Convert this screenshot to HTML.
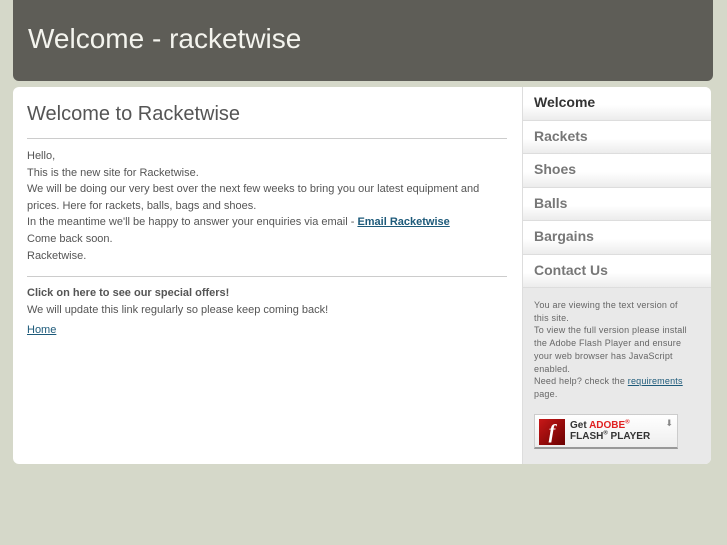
<!DOCTYPE html>
<html><head><style>
*{margin:0;padding:0;box-sizing:border-box}
body{width:727px;height:545px;background:#d5d8c9;font-family:"Liberation Sans",sans-serif;position:relative;overflow:hidden}
#hd{position:absolute;left:13px;top:0;width:700px;height:81px;background:#5e5d57;border-radius:0 0 6px 6px}
#hd h1{position:absolute;left:15px;top:23px;font-size:28px;font-weight:normal;color:#f4f4ee}
#main{position:absolute;left:13px;top:87px;width:698px;height:377px;background:#fff;border-radius:6px;overflow:hidden}
#content{position:absolute;left:14px;top:0;width:480px}
h2{font-size:20px;font-weight:normal;color:#555;margin-top:16px;height:35px}
hr{border:0;border-top:1px solid #ccc}
p{font-size:11px;line-height:16.6px;color:#555}
a{color:#1d5a7a;text-decoration:underline}
#side{position:absolute;left:509px;top:0;width:189px;height:377px;background:#e9e9e9;border-left:1px solid #ddd}
.nav{height:33.5px;border-bottom:1px solid #ddd;background:linear-gradient(#fff,#fff 55%,#ececec);font-size:14px;font-weight:bold;color:#777;padding:7px 0 0 11px}
.info{font-size:9px;line-height:12.7px;color:#666;padding:11px 0 0 11px;letter-spacing:0.2px;white-space:nowrap}
.flash{position:absolute;left:11px;top:327px;width:144px;height:35px;background:linear-gradient(#fff,#eee);border:1px solid #ccc;border-bottom:2px solid #999;}
.fl{position:absolute;left:4px;top:4px;width:26px;height:26px;background:linear-gradient(135deg,#c81818,#6a0000);color:#fff;font:italic bold 20px "Liberation Serif",serif;text-align:center;line-height:26px}
.ft{position:absolute;left:35px;top:5px;font-size:10px;font-weight:bold;color:#333;line-height:11px}
sup{font-size:6px;line-height:0}
</style></head><body>
<div id="hd"><h1>Welcome - racketwise</h1></div>
<div id="main">
<div id="content">
<h2>Welcome to Racketwise</h2>
<hr>
<p style="margin-top:9px">Hello,<br>This is the new site for Racketwise.<br>We will be doing our very best over the next few weeks to bring you our latest equipment and prices. Here for rackets, balls, bags and shoes.<br>In the meantime we'll be happy to answer your enquiries via email - <a href="#"><b>Email Racketwise</b></a><br>Come back soon.<br>Racketwise.</p>
<hr style="margin-top:12px">
<p style="margin-top:8px"><b>Click on here to see our special offers!</b><br>We will update this link regularly so please keep coming back!</p>
<p style="margin-top:4px"><a href="#">Home</a></p>
</div>
<div id="side">
<div class="nav" style="color:#333">Welcome</div>
<div class="nav">Rackets</div>
<div class="nav">Shoes</div>
<div class="nav">Balls</div>
<div class="nav">Bargains</div>
<div class="nav">Contact Us</div>
<div class="info">You are viewing the text version of<br>this site.<br>To view the full version please install<br>the Adobe Flash Player and ensure<br>your web browser has JavaScript<br>enabled.<br>Need help? check the <a href="#">requirements</a><br>page.</div>
<div class="flash"><div class="fl">f</div><div class="ft">Get <span style="color:#e02020">ADOBE<sup>®</sup></span><br>FLASH<sup>®</sup> PLAYER</div><div style="position:absolute;right:4px;top:3px;color:#888;font-size:9px">⬇</div></div>
</div>
</div>
</body></html>
